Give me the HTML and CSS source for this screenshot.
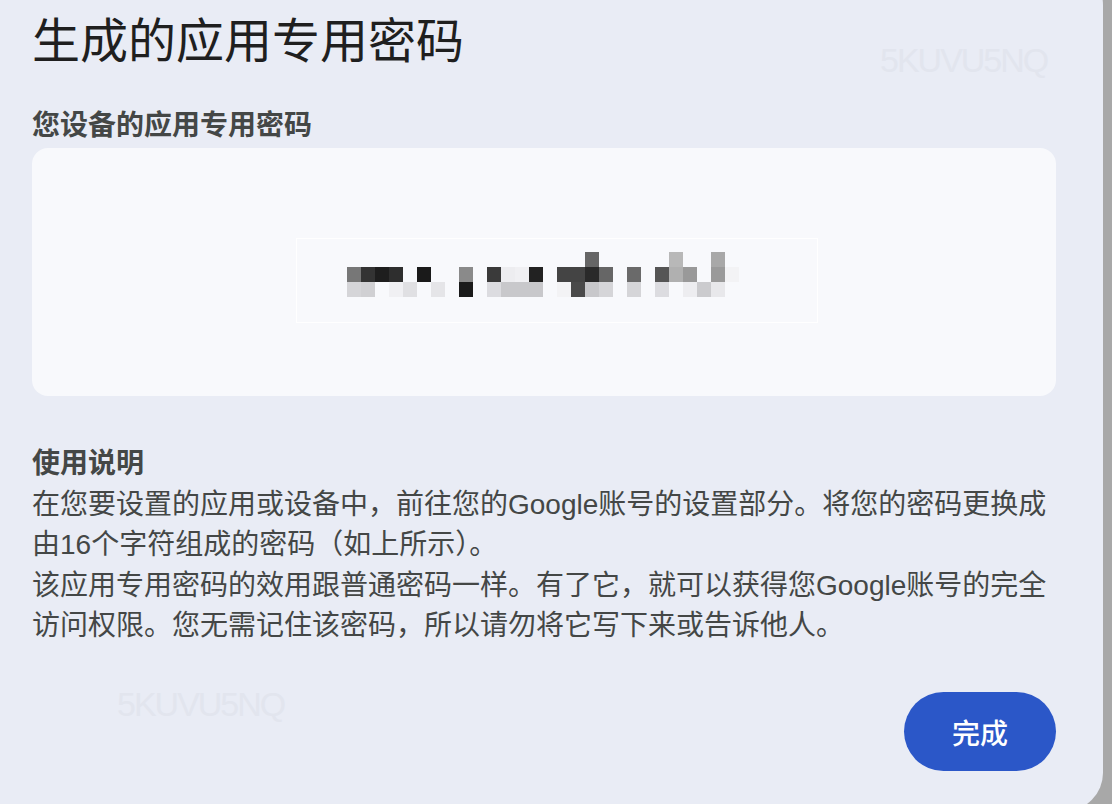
FILE: index.html
```html
<!DOCTYPE html>
<html lang="zh-CN">
<head>
<meta charset="utf-8">
<title>生成的应用专用密码</title>
<link rel="stylesheet" href="styles.css">
</head>
<body>
<div class="dialog">
  <h1 class="title">生成的应用专用密码</h1>
  <h2 class="label">您设备的应用专用密码</h2>
  <div class="card">
    <div class="pw-box">
      <svg class="mosaic" width="392" height="45" viewBox="0 0 392 45" aria-label="密码（已打码）">
        <!-- top row -->
        <rect x="238" y="0" width="14" height="15" fill="#666"/>
        <rect x="322" y="0" width="14" height="15" fill="#b8b8b8"/>
        <rect x="364" y="0" width="14" height="15" fill="#a8a8a8"/>
        <!-- middle row -->
        <rect x="0" y="15" width="14" height="15" fill="#777"/>
        <rect x="14" y="15" width="14" height="15" fill="#333"/>
        <rect x="28" y="15" width="14" height="15" fill="#1e1e1e"/>
        <rect x="42" y="15" width="14" height="15" fill="#2e2e2e"/>
        <rect x="70" y="15" width="14" height="15" fill="#1a1a1a"/>
        <rect x="112" y="15" width="14" height="15" fill="#8a8a8a"/>
        <rect x="140" y="15" width="14" height="15" fill="#3a3a3a"/>
        <rect x="154" y="15" width="14" height="15" fill="#ededf0"/>
        <rect x="168" y="15" width="14" height="15" fill="#f0f0f3"/>
        <rect x="182" y="15" width="14" height="15" fill="#222"/>
        <rect x="210" y="15" width="14" height="15" fill="#444"/>
        <rect x="224" y="15" width="14" height="15" fill="#444"/>
        <rect x="238" y="15" width="14" height="15" fill="#2a2a2a"/>
        <rect x="252" y="15" width="14" height="15" fill="#666"/>
        <rect x="280" y="15" width="14" height="15" fill="#6a6a6a"/>
        <rect x="308" y="15" width="14" height="15" fill="#555"/>
        <rect x="322" y="15" width="14" height="15" fill="#b0b0b0"/>
        <rect x="336" y="15" width="14" height="15" fill="#999"/>
        <rect x="364" y="15" width="14" height="15" fill="#9a9a9a"/>
        <rect x="378" y="15" width="14" height="15" fill="#f3f3f5"/>
        <!-- bottom row -->
        <rect x="0" y="30" width="14" height="15" fill="#d5d5d8"/>
        <rect x="14" y="30" width="14" height="15" fill="#d0d0d3"/>
        <rect x="42" y="30" width="14" height="15" fill="#f0f0f3"/>
        <rect x="56" y="30" width="14" height="15" fill="#e0e0e3"/>
        <rect x="84" y="30" width="14" height="15" fill="#e5e5e8"/>
        <rect x="112" y="30" width="14" height="15" fill="#1a1a1a"/>
        <rect x="140" y="30" width="14" height="15" fill="#dcdce0"/>
        <rect x="154" y="30" width="14" height="15" fill="#c8c8cb"/>
        <rect x="168" y="30" width="14" height="15" fill="#c8c8cb"/>
        <rect x="182" y="30" width="14" height="15" fill="#c8c8cb"/>
        <rect x="210" y="30" width="14" height="15" fill="#f3f3f5"/>
        <rect x="224" y="30" width="14" height="15" fill="#4a4a4a"/>
        <rect x="238" y="30" width="14" height="15" fill="#c8c8cb"/>
        <rect x="252" y="30" width="14" height="15" fill="#d5d5d8"/>
        <rect x="280" y="30" width="14" height="15" fill="#d5d5d8"/>
        <rect x="308" y="30" width="14" height="15" fill="#dcdce0"/>
        <rect x="336" y="30" width="14" height="15" fill="#ededf0"/>
        <rect x="350" y="30" width="14" height="15" fill="#cbcbce"/>
        <rect x="364" y="30" width="14" height="15" fill="#e8e8eb"/>
      </svg>
    </div>
  </div>
  <section class="usage">
    <h3 class="usage-title">使用说明</h3>
    <p class="usage-text">在您要设置的应用或设备中，前往您的Google账号的设置部分。将您的密码更换成由16个字符组成的密码（如上所示）。</p>
    <p class="usage-text">该应用专用密码的效用跟普通密码一样。有了它，就可以获得您Google账号的完全访问权限。您无需记住该密码，所以请勿将它写下来或告诉他人。</p>
  </section>
  <div class="actions">
    <button class="done-btn" type="button">完成</button>
  </div>
  <span class="watermark wm-top">5KUVU5NQ</span>
  <span class="watermark wm-bottom">5KUVU5NQ</span>
</div>
</body>
</html>
```

FILE: styles.css
```css
* {
  box-sizing: border-box;
}

html, body {
  margin: 0;
  padding: 0;
}

body {
  width: 1112px;
  height: 804px;
  overflow: hidden;
  background: #a8a8a8;
  font-family: "Liberation Sans", "Noto Sans CJK SC", sans-serif;
  color: #444746;
}

.dialog {
  position: relative;
  width: 1143px;
  margin: -33px 0 0 -40px;
  padding: 46px 47px 40px 72px;
  background: #e9ecf5;
  border-radius: 38px;
}

.title {
  margin: 0;
  font-size: 48px;
  line-height: 58px;
  font-weight: 400;
  color: #1f1f1f;
}

.label {
  margin: 38px 0 0;
  font-size: 28px;
  line-height: 34px;
  font-weight: 700;
  color: #444746;
}

.card {
  margin-top: 5px;
  height: 248px;
  padding: 90px 0 0 264px;
  background: #f8f9fc;
  border-radius: 16px;
}

.pw-box {
  width: 522px;
  height: 85px;
  padding: 13px 0 0 50px;
  border: 1px solid #ffffff;
}

.mosaic {
  display: block;
  filter: blur(0.6px);
}

.usage {
  margin-top: 48px;
}

.usage-title {
  margin: 0;
  font-size: 28px;
  line-height: 40.5px;
  font-weight: 700;
  color: #444746;
}

.usage-text {
  margin: 0;
  font-size: 28px;
  line-height: 40.5px;
  font-weight: 400;
  color: #444746;
}

.actions {
  display: flex;
  justify-content: flex-end;
  margin-top: 45.5px;
}

.done-btn {
  width: 152px;
  height: 79px;
  border: none;
  border-radius: 40px;
  background: #2b57c8;
  color: #ffffff;
  font-family: "Liberation Sans", "Noto Sans CJK SC", sans-serif;
  font-size: 28px;
  font-weight: 500;
  padding: 0;
}

.watermark {
  position: absolute;
  font-family: "Liberation Sans", Arial, sans-serif;
  font-size: 34px;
  line-height: 34px;
  letter-spacing: -2px;
  color: #e2e5ee;
  pointer-events: none;
}

.wm-top {
  left: 920px;
  top: 76px;
}

.wm-bottom {
  left: 157px;
  top: 720px;
}
```
